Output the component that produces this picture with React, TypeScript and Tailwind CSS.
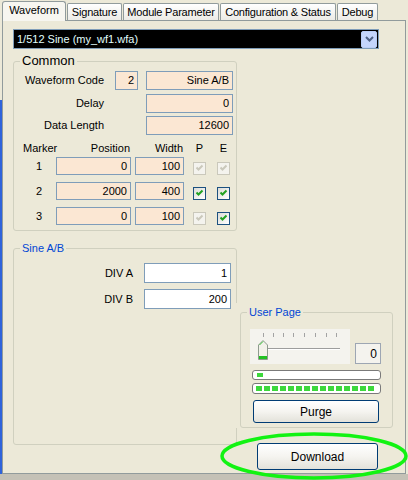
import React from 'react';

const Box = ({ className, children }: { className: string; children?: React.ReactNode }) => (
  <div className={`flex items-center justify-end border border-[#7F9DB9] pr-[3px] leading-none ${className}`}>{children}</div>
);

const Check = ({ enabled }: { enabled: boolean }) => (
  <div
    className={`mt-[5px] flex h-[13px] w-[13px] items-center justify-center border ${
      enabled ? 'border-[#1C5180] bg-gradient-to-br from-[#DCDCD7] to-white' : 'border-[#CAC8BB] bg-[#F4F3EE]'
    }`}
  >
    <svg width="9" height="9" viewBox="0 0 9 9">
      <path d="M1.5 3.5 L3.5 5.5 L7.5 1.5" fill="none" stroke={enabled ? '#21A121' : '#CAC8BB'} strokeWidth="2" />
    </svg>
  </div>
);

const XpButton = ({ className, label }: { className: string; label: string }) => (
  <div
    className={`flex items-center justify-center rounded-[3px] border border-[#003C74] bg-gradient-to-b from-white via-[#F5F4F0] to-[#E3E2DA] ${className}`}
  >
    {label}
  </div>
);

const tabs = [
  { label: 'Signature', cls: 'w-[55px]' },
  { label: 'Module Parameter', cls: 'w-[96px]' },
  { label: 'Configuration & Status', cls: 'w-[116px]' },
  { label: 'Debug', cls: 'w-[41px]' },
];

const markers = [
  { n: 1, pos: '0', width: '100', p: false, e: false },
  { n: 2, pos: '2000', width: '400', p: true, e: true },
  { n: 3, pos: '0', width: '100', p: false, e: true },
];

const ticks = [13, 23, 33, 43, 54, 65, 76, 86];

export default function App() {
  return (
    <div className="relative h-[480px] w-[408px] overflow-hidden bg-[#ECE9D8] font-['Liberation_Sans',Arial,sans-serif] text-[11px] text-black">
      {/* tab strip */}
      <div className="flex h-[20px] items-end pl-[2px]">
        <div className="relative z-10 -mb-[1px] flex h-[20px] w-[64px] items-center justify-center rounded-t-[3px] border border-b-0 border-[#919B9C] bg-[#F7F6F0] pb-[2px]">
          Waveform
        </div>
        {tabs.map((t) => (
          <div
            key={t.label}
            className={`ml-[1px] flex h-[17px] items-center justify-center whitespace-nowrap rounded-t-[2px] border border-b-0 border-[#919B9C] bg-gradient-to-b from-white to-[#ECEBE6] tracking-[-0.2px] ${t.cls}`}
          >
            {t.label}
          </div>
        ))}
      </div>

      {/* tab page */}
      <div className="ml-[2px] h-[454px] w-[404px] border border-[#919B9C] bg-[#ECE9D8] pl-[10px]">
        {/* waveform select */}
        <div className="mt-[8px] flex h-[20px] w-[366px] items-center border border-[#7F9DB9] bg-black p-[1px]">
          <span className="flex-1 pl-[2px] text-[#E2FFFF]">1/512 Sine (my_wf1.wfa)</span>
          <div className="flex h-[17px] w-[16px] items-center justify-center rounded-[2px] border border-[#B9CDF6] bg-[#C4D5FC]">
            <svg width="9" height="6" viewBox="0 0 9 6">
              <path d="M1 1 L4.5 4.5 L8 1" fill="none" stroke="#4D6185" strokeWidth="2" />
            </svg>
          </div>
        </div>

        <div className="mt-[12px] flex">
          {/* left column */}
          <div className="flex w-[224px] flex-col">
            <div className="relative h-[170px] rounded-[3px] border border-[#D0D0BF]">
              <span className="absolute -top-[9px] left-[6px] bg-[#ECE9D8] px-[2px] text-[13px] leading-[15px]">Common</span>
              <div className="pt-[9px]">
                <div className="flex h-[19px] items-center">
                  <span className="w-[90px] text-right">Waveform Code</span>
                  <Box className="ml-[11px] h-[19px] w-[23px] bg-[#FBE7D3]">2</Box>
                  <Box className="ml-[8px] h-[19px] w-[87px] bg-[#FBE7D3]">Sine A/B</Box>
                </div>
                <div className="mt-[4px] flex h-[19px] items-center">
                  <span className="w-[90px] text-right">Delay</span>
                  <Box className="ml-[42px] h-[19px] w-[87px] bg-[#FBE7D3]">0</Box>
                </div>
                <div className="mt-[3px] flex h-[19px] items-center">
                  <span className="w-[90px] text-right">Data Length</span>
                  <Box className="ml-[42px] h-[19px] w-[87px] bg-[#FBE7D3]">12600</Box>
                </div>

                <div className="mt-[7px] flex h-[12px] items-center leading-[12px]">
                  <span className="w-[42px] whitespace-nowrap pl-[9px]">Marker</span>
                  <span className="w-[75px] pr-[1px] text-right">Position</span>
                  <span className="ml-[4px] w-[49px] pr-[1px] text-right">Width</span>
                  <span className="ml-[9px] w-[13px] text-center">P</span>
                  <span className="ml-[11px] w-[13px] text-center">E</span>
                </div>
                {markers.map((m, i) => (
                  <div key={m.n} className={`flex h-[18px] items-center ${i === 0 ? 'mt-[3px]' : 'mt-[7px]'}`}>
                    <span className="w-[42px] pl-[8px] text-center">{m.n}</span>
                    <Box className="h-[18px] w-[75px] bg-[#FBE7D3]">{m.pos}</Box>
                    <Box className="ml-[4px] h-[18px] w-[49px] bg-[#FBE7D3]">{m.width}</Box>
                    <div className="ml-[9px]">
                      <Check enabled={m.p} />
                    </div>
                    <div className="ml-[11px]">
                      <Check enabled={m.e} />
                    </div>
                  </div>
                ))}
              </div>
            </div>

            <div className="relative mt-[17px] h-[197px] rounded-[3px] border border-[#D0D0BF]">
              <span className="absolute -top-[7px] left-[6px] bg-[#ECE9D8] px-[2px] leading-[13px] text-[#0046D5]">Sine A/B</span>
              <div className="mt-[14px] flex h-[20px] items-center">
                <span className="w-[119px] text-right">DIV A</span>
                <Box className="ml-[11px] h-[20px] w-[87px] bg-white">1</Box>
              </div>
              <div className="mt-[6px] flex h-[20px] items-center">
                <span className="w-[119px] text-right">DIV B</span>
                <Box className="ml-[11px] h-[20px] w-[87px] bg-white">200</Box>
              </div>
            </div>
          </div>

          {/* right column */}
          <div className="flex flex-col">
            <div className="relative z-10 -ml-[4px] mt-[242px] w-[163px] bg-[#ECE9D8] pl-[7px] pt-[9px]">
              <div className="relative h-[116px] w-[153px] rounded-[3px] border border-[#D0D0BF]">
                <span className="absolute -top-[7px] left-[6px] bg-[#ECE9D8] px-[2px] leading-[13px] text-[#0046D5]">User Page</span>
                <div className="ml-[9px] mt-[16px] flex items-end">
                  <div className="h-[35px] w-[100px] bg-[#F4F3EE]">
                    <svg width="100" height="35" viewBox="0 0 100 35">
                      {ticks.map((x) => (
                        <line key={x} x1={x + 0.5} y1="4" x2={x + 0.5} y2="8" stroke="#A3A3A3" strokeWidth="1" />
                      ))}
                      <line x1="18" y1="19.5" x2="90" y2="19.5" stroke="#9D9D9D" strokeWidth="1" />
                      <line x1="18" y1="20.5" x2="90" y2="20.5" stroke="#FFFFFF" strokeWidth="1" />
                      <path d="M8.5 16 L13 11.5 L17.5 16 L17.5 30.5 L8.5 30.5 Z" fill="#F2F1EA" stroke="#8E9A8E" strokeWidth="1" />
                      <rect x="9" y="27" width="8" height="3" fill="#21C121" />
                      <path d="M9.5 16 L13 12.5" stroke="#3CC83C" strokeWidth="1" />
                    </svg>
                  </div>
                  <Box className="ml-[5px] h-[21px] w-[26px] border-[#9DA6B3] bg-[#F4F3EE] text-[12px]">0</Box>
                </div>
                <div className="ml-[11px] mt-[6px] flex h-[10px] w-[129px] items-center rounded-[3px] border border-[#7A7A7A] bg-white px-[4px]">
                  <div className="h-[4px] w-[6px] bg-[#3CD83C]" />
                </div>
                <div className="ml-[11px] mt-[3px] flex h-[11px] w-[129px] items-center gap-[2px] rounded-[3px] border border-[#7A7A7A] bg-white px-[3px]">
                  {Array.from({ length: 15 }).map((_, i) => (
                    <div key={i} className="h-[5px] w-[6px] bg-[#3CD83C]" />
                  ))}
                </div>
                <XpButton className="ml-[12px] mt-[6px] h-[23px] w-[126px] text-[12px]" label="Purge" />
              </div>
            </div>
            <XpButton className="ml-[20px] mt-[15px] h-[27px] w-[121px] text-[12px]" label="Download" />
          </div>
        </div>
      </div>
      <div className="h-[6px] bg-[#C4C1B6]" />

      {/* window edge */}
      <div className="absolute bottom-[6px] left-0 top-[100px] w-[2px] bg-[#2F63DB]" />

      {/* highlight ring */}
      <svg className="absolute left-[218px] top-[430px]" width="190" height="50" viewBox="0 0 190 50">
        <ellipse cx="96" cy="26" rx="92" ry="22" fill="none" stroke="#12F312" strokeWidth="3.5" />
      </svg>
    </div>
  );
}
